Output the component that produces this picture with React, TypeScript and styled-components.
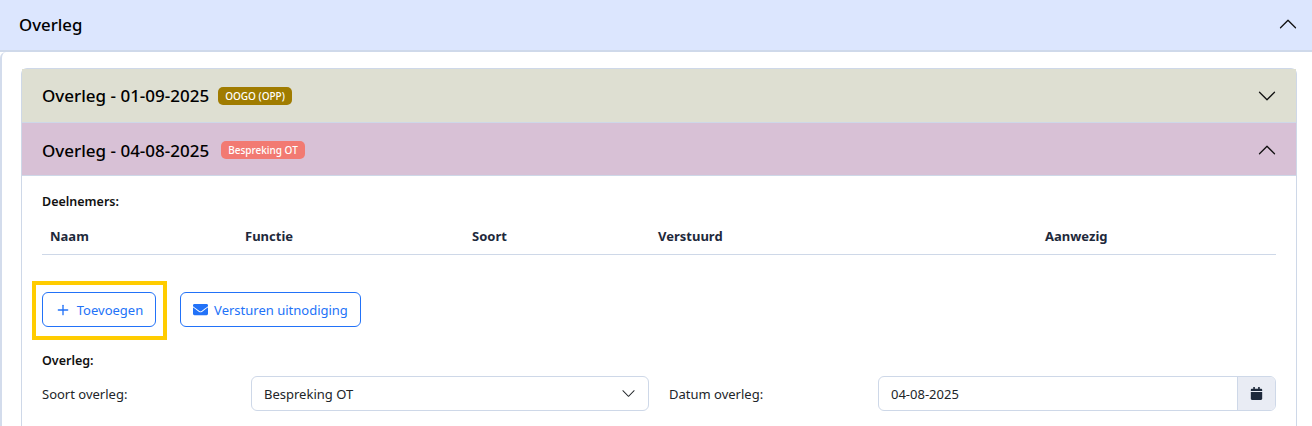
import React from "react";
import styled, { createGlobalStyle } from "styled-components";
import { Plus } from "lucide-react";
import { FaEnvelope, FaCalendar } from "react-icons/fa";

const Global = createGlobalStyle`
  html, body { margin: 0; padding: 0; background: #fff; }
  body { font-family: "Noto Sans", "Open Sans", sans-serif; color: #212529; overflow: hidden; height: 426px; }
  * { box-sizing: border-box; }
`;

const Page = styled.div`
  width: 1312px;
  height: 426px;
  overflow: hidden;
  display: flex;
  flex-direction: column;
`;

const MainHeader = styled.div`
  height: 52px;
  flex: none;
  background: #dce6fe;
  border-bottom: 2px solid #cfd9ea;
  display: flex;
  align-items: center;
  justify-content: space-between;
  padding: 0 14px 2px 19px;
  font-size: 16.8px;
  font-weight: 500;
  color: #000;
`;

const MainBody = styled.div`
  flex: 1;
  display: flex;
  flex-direction: column;
  border-left: 2px solid #d3dcec;
  border-top-left-radius: 6px;
  padding: 16px 15px 0 19px;
`;

const Accordion = styled.div`
  flex: 1;
  border: 1px solid #ced8e8;
  border-bottom: none;
  border-radius: 6px 6px 0 0;
`;

const ItemHeader = styled.div<{ $bg: string; $h: number; $pt?: number }>`
  height: ${(p) => p.$h}px;
  background: ${(p) => p.$bg};
  border-bottom: 1px solid #ced8e8;
  display: flex;
  align-items: center;
  padding: ${(p) => p.$pt ?? 0}px 19px 0 20px;
  font-size: 17px;
  font-weight: 500;
  color: #000;
`;

const Badge = styled.span<{ $bg: string; $gap: number }>`
  background: ${(p) => p.$bg};
  color: #fff;
  font-size: 10px;
  font-weight: 500;
  line-height: 18px;
  height: 18px;
  padding: 0 7px;
  margin-left: ${(p) => p.$gap}px;
  border-radius: 5px;
`;

const ChevronSvg = styled.svg<{ $up?: boolean }>`
  display: block;
  transform: ${(p) => (p.$up ? "rotate(180deg)" : "none")};
`;

const Chevron = ({ up, size = 20 }: { up?: boolean; size?: number }) => (
  <ChevronSvg $up={up} width={size} height={size} viewBox="0 0 16 16" fill="currentColor">
    <path
      fillRule="evenodd"
      d="M1.646 4.646a.5.5 0 0 1 .708 0L8 10.293l5.646-5.647a.5.5 0 0 1 .708.708l-6 6a.5.5 0 0 1-.708 0l-6-6a.5.5 0 0 1 0-.708z"
    />
  </ChevronSvg>
);

const Toggle = styled.span`
  margin-left: auto;
  display: flex;
  color: #111;
`;

const ItemBody = styled.div`
  padding: 17px 20px 0 20px;
`;

const SectionLabel = styled.div`
  font-size: 12.5px;
  font-weight: 600;
  line-height: 18px;
  color: #111;
`;

const TableHead = styled.div`
  display: grid;
  grid-template-columns: 195px 227px 186px 387px 1fr;
  padding: 0 8px;
  margin-top: 7px;
  height: 37px;
  align-items: center;
  border-bottom: 1px solid #ced8e8;
  font-size: 13px;
  font-weight: 700;
  color: #1e293b;
`;

const Actions = styled.div`
  display: flex;
  gap: 24px;
  margin-top: 37px;
`;

const Highlight = styled.div`
  position: relative;
  display: flex;
  &::after {
    content: "";
    position: absolute;
    inset: -11px -11px -13px -10px;
    border: 4px solid #ffcc00;
    pointer-events: none;
  }
`;

const Button = styled.button<{ $w: number }>`
  height: 35px;
  width: ${(p) => p.$w}px;
  display: inline-flex;
  align-items: center;
  justify-content: center;
  gap: 6px;
  background: #fff;
  border: 1px solid #2272f8;
  border-radius: 6px;
  color: #2272f8;
  font-family: inherit;
  font-size: 13px;
  padding: 0;
`;

const OverlegLabel = styled(SectionLabel)`
  margin-top: 25px;
`;

const FormRow = styled.div`
  display: grid;
  grid-template-columns: 209px 398px 229px 1fr;
  align-items: center;
  margin-top: 6px;
`;

const FieldLabel = styled.label`
  font-size: 13px;
  color: #212529;
`;

const SecondLabel = styled(FieldLabel)`
  padding-left: 20px;
`;

const SelectBox = styled.div`
  height: 35px;
  border: 1px solid #ced8e8;
  border-radius: 6px;
  display: flex;
  align-items: center;
  justify-content: space-between;
  padding: 0 12px 0 12px;
  font-size: 13px;
  color: #212529;
`;

const DateGroup = styled.div`
  height: 35px;
  display: flex;
  border: 1px solid #ced8e8;
  border-radius: 6px;
  overflow: hidden;
`;

const DateValue = styled.div`
  flex: 1;
  display: flex;
  align-items: center;
  padding: 0 12px;
  font-size: 13px;
  color: #212529;
`;

const DateAddon = styled.div`
  width: 38px;
  display: flex;
  align-items: center;
  justify-content: center;
  background: #e9ecf4;
  border-left: 1px solid #ced8e8;
  color: #1e293b;
`;

export default function App() {
  return (
    <Page>
      <Global />
      <MainHeader>
        <span>Overleg</span>
        <Toggle><Chevron up /></Toggle>
      </MainHeader>
      <MainBody>
        <Accordion>
          <ItemHeader $bg="#dedfd2" $h={54}>
            <span>Overleg - 01-09-2025</span>
            <Badge $bg="#a07c00" $gap={9}>OOGO (OPP)</Badge>
            <Toggle><Chevron /></Toggle>
          </ItemHeader>
          <ItemHeader $bg="#d8c1d6" $h={53} $pt={2}>
            <span>Overleg - 04-08-2025</span>
            <Badge $bg="#f27a72" $gap={12}>Bespreking OT</Badge>
            <Toggle><Chevron up /></Toggle>
          </ItemHeader>
          <ItemBody>
            <SectionLabel>Deelnemers:</SectionLabel>
            <TableHead>
              <span>Naam</span>
              <span>Functie</span>
              <span>Soort</span>
              <span>Verstuurd</span>
              <span>Aanwezig</span>
            </TableHead>
            <Actions>
              <Highlight>
                <Button $w={114}><Plus size={16} />Toevoegen</Button>
              </Highlight>
              <Button $w={181}><FaEnvelope size={15} />Versturen uitnodiging</Button>
            </Actions>
            <OverlegLabel>Overleg:</OverlegLabel>
            <FormRow>
              <FieldLabel>Soort overleg:</FieldLabel>
              <SelectBox>
                Bespreking OT
                <Chevron size={15} />
              </SelectBox>
              <SecondLabel>Datum overleg:</SecondLabel>
              <DateGroup>
                <DateValue>04-08-2025</DateValue>
                <DateAddon><FaCalendar size={13} /></DateAddon>
              </DateGroup>
            </FormRow>
          </ItemBody>
        </Accordion>
      </MainBody>
    </Page>
  );
}
